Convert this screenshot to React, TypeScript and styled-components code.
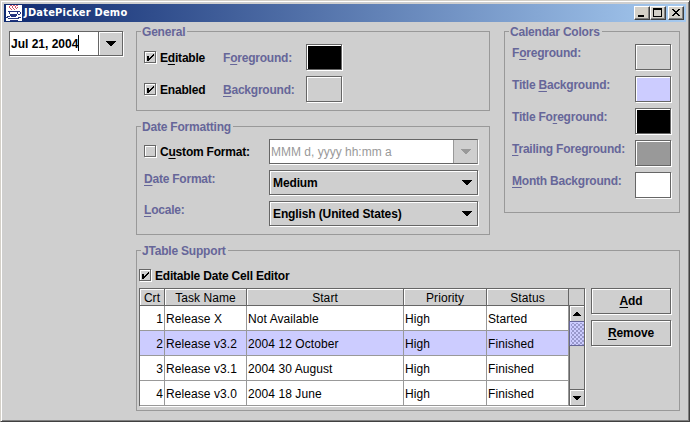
import React from "react";
import styled, { createGlobalStyle, css } from "styled-components";

const face = "#cfcfcf";
const shadow = "#666666";
const line = "#999999";
const purple = "#666699";

const GlobalStyle = createGlobalStyle`
  * { box-sizing: border-box; }
  body { margin: 0; overflow: hidden; background: ${face}; }
`;

const metalEdge = css`
  border: 1px solid ${shadow};
  box-shadow: inset 1px 1px 0 #fff, 1px 1px 0 #fff;
`;

const mnemonic = css`
  u {
    text-decoration: underline 1px;
    text-underline-offset: 2px;
    text-decoration-skip-ink: none;
  }
`;

const Window = styled.div`
  width: 690px;
  height: 422px;
  display: flex;
  flex-direction: column;
  background: ${face};
  border: 1px solid;
  border-color: #d4d0c8 #404040 #404040 #d4d0c8;
  box-shadow: inset 1px 1px 0 #fff, inset -1px -1px 0 #808080;
  padding: 3px 2px 2px 3px;
  font: 12px/14px "Liberation Sans", Arial, sans-serif;
  color: #000;
  white-space: nowrap;
`;

const TitleBar = styled.header`
  display: flex;
  flex: none;
  align-items: flex-start;
  width: 682px;
  height: 18px;
  padding: 1px 2px;
  background: linear-gradient(90deg, #0f2a70, #a6caf0);
`;

const Title = styled.h1`
  flex: 1;
  margin: 1px 0 0 2px;
  color: #fff;
  font: bold 11px/13px "DejaVu Sans Condensed", "DejaVu Sans", sans-serif;
  letter-spacing: 0.22px;
`;

const WindowButton = styled.button<{ $gap?: number }>`
  display: block;
  width: 16px;
  height: 14px;
  margin: 1px 0 0 ${(p) => p.$gap ?? 0}px;
  padding: 0;
  background: #d4d0c8;
  border: 1px solid;
  border-color: #fff #404040 #404040 #fff;
  box-shadow: inset -1px -1px 0 #808080;
  svg { display: block; }
`;

const Content = styled.main`
  display: grid;
  grid-template-columns: 127px 368px 176px;
  grid-template-rows: 80px 109px 161px;
  row-gap: 15px;
  margin: 9px 0 0 5px;
`;

const DateField = styled.div`
  display: flex;
  width: 114px;
  height: 25px;
  border: 1px solid ${shadow};
  box-shadow: 1px 1px 0 #fff;
  background: #fff;
`;

const FieldText = styled.div<{ $disabled?: boolean }>`
  flex: 1;
  display: flex;
  padding: 5px 0 0 1px;
  font-weight: ${(p) => (p.$disabled ? "normal" : "bold")};
  color: ${(p) => (p.$disabled ? line : "#000")};
`;

const Caret = styled.i`
  width: 1px;
  height: 16px;
  margin-top: -2px;
  background: #000;
`;

const Drop = styled.div<{ $disabled?: boolean }>`
  width: 24px;
  display: grid;
  place-items: center;
  background: ${face};
  border-left: 1px solid ${(p) => (p.$disabled ? line : shadow)};
  box-shadow: ${(p) => (p.$disabled ? "none" : "inset 1px 1px 0 #fff")};
`;

const Group = styled.section`
  width: 354px;
  border: 1px solid ${line};
`;

const CalendarGroup = styled(Group)`
  grid-column: 3;
  grid-row: 1 / 3;
  width: 176px;
  height: 182px;
`;

const TableGroup = styled(Group)`
  grid-column: 2 / 4;
  width: 544px;
`;

const MiddleGroup = styled(Group)`
  grid-column: 2;
`;

const Legend = styled.h2`
  width: fit-content;
  height: 14px;
  margin: -7px 0 0 4px;
  padding: 0 2px 0 1px;
  background: ${face};
  color: ${purple};
  font: bold 12px/14px "Liberation Sans", Arial, sans-serif;
  letter-spacing: -0.2px;
`;

const FormRows = styled.div`
  display: grid;
  row-gap: 5px;
  padding: 5px 0 0 7px;
`;

const GeneralRows = styled(FormRows)`
  grid-template-columns: 79px 83px 36px;
  grid-auto-rows: 27px;
`;

const ColorRows = styled(FormRows)`
  grid-template-columns: 123px 36px;
  grid-auto-rows: 27px;
`;

const FormatRows = styled(FormRows)`
  grid-template-columns: 125px 209px;
  grid-auto-rows: 26px;
`;

const Label = styled.span<{ $top: number }>`
  padding-top: ${(p) => p.$top}px;
  color: ${purple};
  font-weight: bold;
  letter-spacing: -0.22px;
  ${mnemonic}
`;

const CheckLabel = styled.label<{ $top?: number }>`
  display: flex;
  gap: 4px;
  padding-top: ${(p) => p.$top ?? 0}px;
  font-weight: bold;
  letter-spacing: -0.2px;
  ${mnemonic}
`;

const EditorCheck = styled(CheckLabel)`
  margin: 11px 0 0 2px;
`;

const Box = styled.span`
  display: block;
  width: 12px;
  height: 12px;
  ${metalEdge}
  svg { display: block; }
`;

const Swatch = styled.span<{ $color: string }>`
  width: 36px;
  height: 26px;
  ${metalEdge}
  background: ${(p) => p.$color};
`;

const Combo = styled.div`
  display: flex;
  width: 209px;
  height: 25px;
  ${metalEdge}
`;

const DisabledCombo = styled(Combo)`
  background: #fff;
  border-right-color: ${line};
  box-shadow: 1px 1px 0 #fff;
`;

const ComboText = styled.span`
  flex: 1;
  padding: 5px 0 0 3px;
  font-weight: bold;
  letter-spacing: -0.12px;
`;

const ComboArrow = styled.span`
  width: 15px;
  display: grid;
  align-items: center;
`;

const TableArea = styled.div`
  display: flex;
  align-items: flex-start;
  gap: 6px;
  padding: 5px 0 0 2px;
`;

const TableFrame = styled.div`
  width: 446px;
  height: 118px;
  display: flex;
  border: 1px solid ${shadow};
  box-shadow: 1px 1px 0 #fff;
`;

const Grid = styled.div`
  width: 429px;
  letter-spacing: 0.08px;
`;

const Row = styled.div<{ $selected?: boolean }>`
  display: grid;
  grid-template-columns: 25px 82px 157px 83px 82px;
  height: 25px;
  background: ${(p) => (p.$selected ? "#ccccff" : "#fff")};
`;

const Cell = styled.span<{ $right?: boolean }>`
  padding: 6px 1px 0 1px;
  text-align: ${(p) => (p.$right ? "right" : "left")};
  border-right: 1px solid ${line};
  border-bottom: 1px solid ${line};
`;

const HeadRow = styled(Row)`
  height: 17px;
  background: ${face};
`;

const HeadCell = styled.span`
  padding-top: 2px;
  text-align: center;
  border-right: 1px solid ${shadow};
  border-bottom: 1px solid ${shadow};
  box-shadow: inset 1px 1px 0 #fff;
`;

const ScrollColumn = styled.div`
  display: flex;
  flex-direction: column;
  width: 15px;
  padding-top: 16px;
`;

const ScrollButton = styled.div`
  height: 16px;
  display: grid;
  place-items: center;
  border-top: 1px solid ${shadow};
  border-left: 1px solid ${shadow};
  box-shadow: inset 1px 1px 0 #fff;
`;

const Thumb = styled.div`
  height: 25px;
  border: 1px solid ${purple};
  border-right: 0;
  background-color: #9999cc;
  background-image: radial-gradient(circle at 1px 1px, #ccccff 0.8px, transparent 1px),
    radial-gradient(circle at 3px 3px, #ccccff 0.8px, transparent 1px);
  background-size: 4px 4px;
  box-shadow: inset 1px 1px 0 #ccccff;
`;

const Track = styled.div`
  flex: 1;
  border-left: 1px solid ${shadow};
`;

const Buttons = styled.div`
  display: flex;
  flex-direction: column;
  gap: 6px;
`;

const PushButton = styled.button`
  width: 80px;
  height: 26px;
  padding: 0;
  background: ${face};
  ${metalEdge}
  font: bold 12px/14px "Liberation Sans", Arial, sans-serif;
  letter-spacing: -0.1px;
  color: #000;
  ${mnemonic}
`;

const Arrow = ({ up, color = "#000", size = 10 }: { up?: boolean; color?: string; size?: number }) => {
  const rows = size / 2;
  return (
    <svg width={size} height={rows} shapeRendering="crispEdges">
      {Array.from({ length: rows }, (_, i) => {
        const inset = up ? rows - 1 - i : i;
        return <rect key={i} x={inset} y={i} width={size - inset * 2} height="1" fill={color} />;
      })}
    </svg>
  );
};

const Check = ({ on }: { on?: boolean }) => (
  <Box>
    {on && (
      <svg width="10" height="10" shapeRendering="crispEdges">
        <path d="M2 4h2v2h1v-1h1v-1h1v-1h1v-1h1v2h-1v1h-1v1h-1v1h-1v1h-1v1h-2z" fill="#000" />
      </svg>
    )}
  </Box>
);

const JavaIcon = () => (
  <svg width="16" height="16" viewBox="0 0 16 16" shapeRendering="crispEdges">
    <rect width="16" height="16" fill="#fff" />
    <path
      fill="#d2546a"
      d="M4 0h2v1h-2zM7 0h2v1h-2zM10 0h2v1h-2zM3 1h1v2h-1zM6 1h1v2h-1zM9 1h1v2h-1zM4 3h1v1h-1zM7 3h1v1h-1zM10 3h1v1h-1zM5 4h1v1h-1zM8 4h1v1h-1zM11 2h1v1h-1z"
    />
    <path
      fill="#24357f"
      d="M2 6h10v1h-10zM12 6h2v1h-2zM14 7h1v2h-1zM12 9h2v1h-2zM3 7h1v2h-1zM11 7h1v2h-1zM4 9h7v2h-7zM1 11h3v1h-3zM0 12h2v1h-2zM2 13h11v1h-11zM5 11h5v1h-5zM12 12h3v1h-3zM4 15h8v1h-8z"
    />
  </svg>
);

const colors: [React.ReactNode, string][] = [
  [<>F<u>o</u>reground:</>, face],
  [<>Title <u>B</u>ackground:</>, "#ccccff"],
  [<>Title Fo<u>r</u>eground:</>, "#000"],
  [<><u>T</u>railing Foreground:</>, "#999"],
  [<><u>M</u>onth Background:</>, "#fff"],
];

const tasks = [
  ["1", "Release X", "Not Available", "High", "Started"],
  ["2", "Release v3.2", "2004 12 October", "High", "Finished"],
  ["3", "Release v3.1", "2004 30 August", "High", "Finished"],
  ["4", "Release v3.0", "2004 18 June", "High", "Finished"],
];

export default function App() {
  return (
    <Window>
      <GlobalStyle />
      <TitleBar>
        <JavaIcon />
        <Title>JDatePicker Demo</Title>
        <WindowButton aria-label="Minimize">
          <svg width="14" height="12"><rect x="3" y="8" width="6" height="2" /></svg>
        </WindowButton>
        <WindowButton aria-label="Maximize">
          <svg width="14" height="12" shapeRendering="crispEdges">
            <path d="M2 1h9v9h-9zM3 3v6h7v-6z" fillRule="evenodd" />
          </svg>
        </WindowButton>
        <WindowButton aria-label="Close" $gap={2}>
          <svg width="14" height="12" shapeRendering="crispEdges">
            <path d="M3 2h2v1h1v1h2v-1h1v-1h2v1h-1v1h-1v1h-1v1h1v1h1v1h1v1h-2v-1h-1v-1h-2v1h-1v1h-2v-1h1v-1h1v-1h1v-1h-1v-1h-1v-1h-1z" />
          </svg>
        </WindowButton>
      </TitleBar>
      <Content>
        <DateField>
          <FieldText>Jul 21, 2004<Caret /></FieldText>
          <Drop><Arrow /></Drop>
        </DateField>
        <MiddleGroup>
          <Legend>General</Legend>
          <GeneralRows>
            <CheckLabel $top={7}><Check on /><span>E<u>d</u>itable</span></CheckLabel>
            <Label $top={7}>F<u>o</u>reground:</Label>
            <Swatch $color="#000" />
            <CheckLabel $top={7}><Check on /><span>Enabled</span></CheckLabel>
            <Label $top={7}><u>B</u>ackground:</Label>
            <Swatch $color={face} />
          </GeneralRows>
        </MiddleGroup>
        <CalendarGroup>
          <Legend>Calendar Colors</Legend>
          <ColorRows>
            {colors.map(([label, color], i) => (
              <React.Fragment key={i}>
                <Label $top={2}>{label}</Label>
                <Swatch $color={color} />
              </React.Fragment>
            ))}
          </ColorRows>
        </CalendarGroup>
        <MiddleGroup>
          <Legend>Date Formatting</Legend>
          <FormatRows>
            <CheckLabel $top={6}><Check /><span>C<u>u</u>stom Format:</span></CheckLabel>
            <DisabledCombo>
              <FieldText $disabled>MMM d, yyyy hh:mm a</FieldText>
              <Drop $disabled><Arrow color={line} /></Drop>
            </DisabledCombo>
            <Label $top={2}><u>D</u>ate Format:</Label>
            <Combo><ComboText>Medium</ComboText><ComboArrow><Arrow /></ComboArrow></Combo>
            <Label $top={2}><u>L</u>ocale:</Label>
            <Combo><ComboText>English (United States)</ComboText><ComboArrow><Arrow /></ComboArrow></Combo>
          </FormatRows>
        </MiddleGroup>
        <TableGroup>
          <Legend>JTable Support</Legend>
          <EditorCheck><Check on /><span>Editable Date Cell Editor</span></EditorCheck>
          <TableArea>
            <TableFrame>
              <Grid>
                <HeadRow>
                  {["Crt", "Task Name", "Start", "Priority", "Status"].map((h) => (
                    <HeadCell key={h}>{h}</HeadCell>
                  ))}
                </HeadRow>
                {tasks.map((task, r) => (
                  <Row key={r} $selected={r === 1}>
                    {task.map((value, c) => (
                      <Cell key={c} $right={c === 0}>{value}</Cell>
                    ))}
                  </Row>
                ))}
              </Grid>
              <ScrollColumn>
                <ScrollButton><Arrow up size={8} /></ScrollButton>
                <Thumb />
                <Track />
                <ScrollButton><Arrow size={8} /></ScrollButton>
              </ScrollColumn>
            </TableFrame>
            <Buttons>
              <PushButton><u>A</u>dd</PushButton>
              <PushButton><u>R</u>emove</PushButton>
            </Buttons>
          </TableArea>
        </TableGroup>
      </Content>
    </Window>
  );
}
